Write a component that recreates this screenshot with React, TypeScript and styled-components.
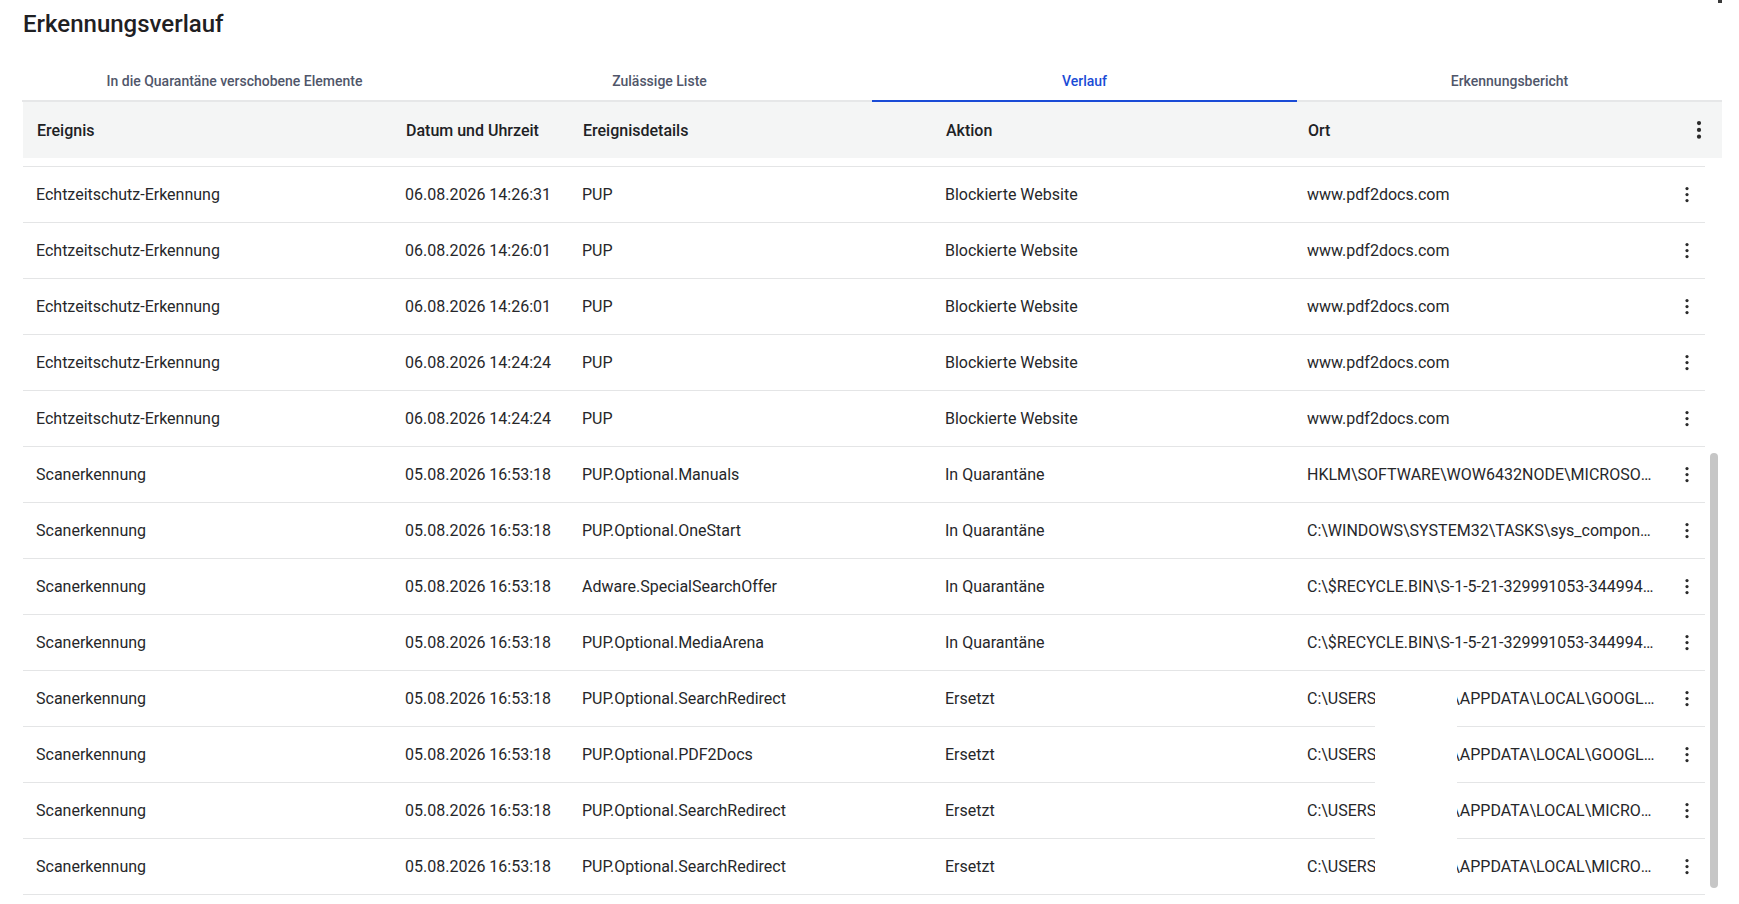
import React from 'react';
import styled, { createGlobalStyle } from 'styled-components';

const GlobalStyle = createGlobalStyle`
  html, body {
    margin: 0;
    padding: 0;
    background: #ffffff;
    overflow: hidden;
  }
  body {
    font-family: Roboto, 'Liberation Sans', Arial, sans-serif;
    color: #202124;
  }
`;

// Layout
const Page = styled.div`
  width: 1700px;
  height: 904px;
  margin-left: 22px;
  display: flex;
  flex-direction: column;
  overflow: hidden;
`;

const TitleBar = styled.div`
  height: 48px;
  display: flex;
  justify-content: space-between;
  align-items: center;
`;

const Title = styled.h1`
  margin: 0 0 0 1px;
  font-size: 24px;
  font-weight: 500;
  line-height: 28px;
  color: #1f2023;
`;

const CornerMark = styled.div`
  align-self: flex-start;
  width: 12px;
  height: 3px;
  margin-right: -8px;
  background: #3a3a3a;
`;

// Tabs
const TabBar = styled.div`
  margin-top: 13px;
  display: grid;
  grid-template-columns: repeat(4, 1fr);
  border-bottom: 2px solid #e6e7e8;
`;

const Tab = styled.button<{ $active?: boolean }>`
  height: 41px;
  margin-bottom: -2px;
  padding: 0;
  border: none;
  border-bottom: 2px solid ${p => (p.$active ? '#1a4bd6' : 'transparent')};
  background: transparent;
  font-family: Roboto, 'Liberation Sans', Arial, sans-serif;
  font-size: 14px;
  font-weight: 500;
  color: ${p => (p.$active ? '#1a4bd6' : '#50566a')};
  cursor: pointer;
`;

// Table
const COLS = '369px 177px 363px 362px 1fr';

const HeaderRow = styled.div`
  height: 56px;
  display: grid;
  grid-template-columns: ${COLS} 46px;
  align-items: center;
  background: #f4f5f5;
  margin-left: 1px;
`;

const HeaderCell = styled.div`
  padding-left: 14px;
  font-size: 16px;
  font-weight: 500;
  color: #202124;
  white-space: nowrap;
`;

const Body = styled.div`
  flex: 1;
  position: relative;
  display: flex;
  overflow: hidden;
`;

const Rows = styled.div`
  flex: 1;
  padding-top: 8px;
  margin-left: 1px;
`;

const Row = styled.div`
  height: 56px;
  box-sizing: border-box;
  display: grid;
  grid-template-columns: ${COLS} 36px;
  align-items: center;
  border-top: 1px solid #e4e5e6;
`;

const Cell = styled.div`
  padding: 0 13px;
  font-size: 16px;
  color: #26272a;
  white-space: nowrap;
  overflow: hidden;
  text-overflow: ellipsis;
`;

const Spacer = styled.span<{ $w: number }>`
  display: inline-block;
  width: ${p => p.$w}px;
`;

const ActionCell = styled.div`
  display: flex;
  justify-content: center;
  align-items: center;
  color: #2b2b2b;
`;

const ScrollTrack = styled.div`
  width: 17px;
  display: flex;
  justify-content: center;
`;

const ScrollThumb = styled.div`
  width: 8px;
  height: 435px;
  margin-top: 295px;
  border-radius: 4px;
  background: #c6c6c6;
`;

// redaction box laid over the user name in the path column
const Redaction = styled.div`
  position: absolute;
  left: 1353px;
  top: 515px;
  width: 82px;
  height: 216px;
  background: #ffffff;
`;

const Dots: React.FC<{ big?: boolean }> = ({ big }) => {
  const r = big ? 2.1 : 1.6;
  const gap = big ? 6.8 : 6;
  const h = gap * 2 + r * 2 + 2;
  return (
    <svg width={8} height={h} viewBox={`0 0 8 ${h}`}>
      {[0, 1, 2].map(i => (
        <circle key={i} cx={4} cy={1 + r + i * gap} r={r} fill="currentColor" />
      ))}
    </svg>
  );
};

type Entry = {
  event: string;
  date: string;
  details: string;
  action: string;
  location: string;
  user?: boolean;
};

const rt = (date: string): Entry => ({
  event: 'Echtzeitschutz-Erkennung',
  date,
  details: 'PUP',
  action: 'Blockierte Website',
  location: 'www.pdf2docs.com',
});

const scan = (details: string, action: string, location: string, user = false): Entry => ({
  event: 'Scanerkennung',
  date: '05.08.2026 16:53:18',
  details,
  action,
  location,
  user,
});

const entries: Entry[] = [
  rt('06.08.2026 14:26:31'),
  rt('06.08.2026 14:26:01'),
  rt('06.08.2026 14:26:01'),
  rt('06.08.2026 14:24:24'),
  rt('06.08.2026 14:24:24'),
  scan('PUP.Optional.Manuals', 'In Quarantäne', 'HKLM\\SOFTWARE\\WOW6432NODE\\MICROSOFT\\WINDOWS\\CURRENTVERSION\\UNINSTALL\\MANUALS'),
  scan('PUP.Optional.OneStart', 'In Quarantäne', 'C:\\WINDOWS\\SYSTEM32\\TASKS\\sys_component_health_check'),
  scan('Adware.SpecialSearchOffer', 'In Quarantäne', 'C:\\$RECYCLE.BIN\\S-1-5-21-329991053-3449947021-1001\\$R8K2J1.exe'),
  scan('PUP.Optional.MediaArena', 'In Quarantäne', 'C:\\$RECYCLE.BIN\\S-1-5-21-329991053-3449947021-1001\\$RQ3LMA.exe'),
  scan('PUP.Optional.SearchRedirect', 'Ersetzt', '\\APPDATA\\LOCAL\\GOOGLE\\CHROME\\USER DATA', true),
  scan('PUP.Optional.PDF2Docs', 'Ersetzt', '\\APPDATA\\LOCAL\\GOOGLE\\CHROME\\USER DATA', true),
  scan('PUP.Optional.SearchRedirect', 'Ersetzt', '\\APPDATA\\LOCAL\\MICROSOFT\\EDGE\\USER DATA', true),
  scan('PUP.Optional.SearchRedirect', 'Ersetzt', '\\APPDATA\\LOCAL\\MICROSOFT\\EDGE\\USER DATA', true),
  scan('PUP.Optional.SearchRedirect', 'Ersetzt', '\\APPDATA\\LOCAL\\MICROSOFT\\EDGE\\USER DATA', true),
];

const tabs = [
  'In die Quarantäne verschobene Elemente',
  'Zulässige Liste',
  'Verlauf',
  'Erkennungsbericht',
];

export default function App() {
  return (
    <>
      <GlobalStyle />
      <Page>
        <TitleBar>
          <Title>Erkennungsverlauf</Title>
          <CornerMark />
        </TitleBar>

        <TabBar>
          {tabs.map(t => (
            <Tab key={t} $active={t === 'Verlauf'}>
              {t}
            </Tab>
          ))}
        </TabBar>

        <HeaderRow>
          <HeaderCell>Ereignis</HeaderCell>
          <HeaderCell>Datum und Uhrzeit</HeaderCell>
          <HeaderCell>Ereignisdetails</HeaderCell>
          <HeaderCell>Aktion</HeaderCell>
          <HeaderCell>Ort</HeaderCell>
          <ActionCell>
            <Dots big />
          </ActionCell>
        </HeaderRow>

        <Body>
          <Rows>
            {entries.map((e, i) => (
              <Row key={i}>
                <Cell>{e.event}</Cell>
                <Cell>{e.date}</Cell>
                <Cell>{e.details}</Cell>
                <Cell>{e.action}</Cell>
                <Cell>
                  {e.user ? (
                    <>
                      C:\USERS
                      <Spacer $w={77} />
                      {e.location}
                    </>
                  ) : (
                    e.location
                  )}
                </Cell>
                <ActionCell>
                  <Dots />
                </ActionCell>
              </Row>
            ))}
          </Rows>
          <ScrollTrack>
            <ScrollThumb />
          </ScrollTrack>
          <Redaction />
        </Body>
      </Page>
    </>
  );
}
